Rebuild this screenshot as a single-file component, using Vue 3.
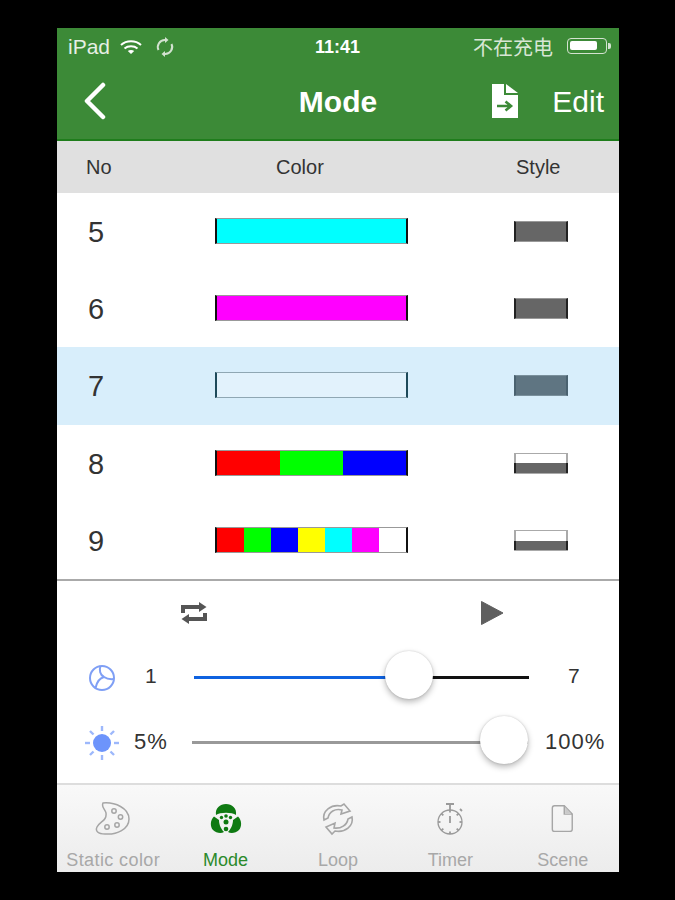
<script setup>
// Mode 页:颜色模式列表 + 速度/亮度滑块 + 底部标签栏
const rows = [
  { no: 5, colors: ['#00ffff'], style: 'solid' },
  { no: 6, colors: ['#ff00ff'], style: 'solid' },
  { no: 7, colors: ['transparent'], style: 'solid', active: true },
  { no: 8, colors: ['#ff0000', '#00ff00', '#0000ff'], style: 'half' },
  { no: 9, colors: ['#ff0000', '#00ff00', '#0000ff', '#ffff00', '#00ffff', '#ff00ff', '#ffffff'], style: 'half' },
]
const tabs = [
  { key: 'palette', label: 'Static color' },
  { key: 'mode', label: 'Mode', active: true },
  { key: 'loop', label: 'Loop' },
  { key: 'timer', label: 'Timer' },
  { key: 'scene', label: 'Scene' },
]
const rays = [0, 45, 90, 135, 180, 225, 270, 315]
const ticks = [0, 45, 90, 135, 180, 225, 270, 315]
</script>

<template>
  <div class="page">
    <div class="phone">
      <header class="top">
        <div class="status">
          <div class="status-left">
            <span>iPad</span>
            <svg class="wifi" width="24" height="16" viewBox="0 0 24 16" fill="none" stroke="#fff" stroke-width="2">
              <path d="M2 6 C7.500 1 16.500 1 22 6" />
              <path d="M5.500 9.500 C9 6.500 15 6.500 18.500 9.500" />
              <path d="M12 15 L8.800 12 C10.500 10.800 13.500 10.800 15.200 12 Z" fill="#fff" stroke="none" />
            </svg>
            <svg class="sync" width="20" height="22" viewBox="0 0 20 22" fill="none" stroke="#d3e2d0" stroke-width="2">
              <path d="M3.500 14 A7 7 0 0 1 10 4" />
              <path d="M16.500 8 A7 7 0 0 1 10 18" />
              <path d="M10 1 L13.500 4 L10 7 Z" fill="#d3e2d0" stroke="none" />
              <path d="M10 15 L6.500 18 L10 21 Z" fill="#d3e2d0" stroke="none" />
            </svg>
          </div>
          <span class="clock">11:41</span>
          <div class="status-right">
            <span class="charge">不在充电</span>
            <span class="battery"><i></i></span>
          </div>
        </div>
        <div class="nav">
          <svg class="back" width="26" height="38" viewBox="0 0 26 38" fill="none" stroke="#fff" stroke-width="4.500" stroke-linecap="round" stroke-linejoin="round">
            <path d="M21 3 L5 19 L21 35" />
          </svg>
          <span class="nav-title">Mode</span>
          <svg class="export" width="28" height="36" viewBox="0 0 28 36">
            <path d="M1 1 H13 V12 H27 V35 H1 Z" fill="#fff" />
            <path d="M15 1 L27 10 H15 Z" fill="#fff" />
            <path d="M6 23 H19 M14.500 18.500 L20 23 L14.500 27.500" fill="none" stroke="#3c8a37" stroke-width="2.600" />
          </svg>
          <span class="nav-edit">Edit</span>
        </div>
      </header>

      <div class="thead">
        <span class="col-no">No</span>
        <span class="col-color">Color</span>
        <span class="col-style">Style</span>
      </div>

      <div class="list">
        <div v-for="r in rows" :key="r.no" class="row" :class="{ active: r.active }">
          <span class="no">{{ r.no }}</span>
          <div class="bar">
            <span v-for="(c, i) in r.colors" :key="i" :style="{ background: c }"></span>
          </div>
          <div class="swatch" :class="r.style"></div>
        </div>
      </div>

      <section class="controls">
        <div class="transport">
          <svg width="28" height="24" viewBox="0 0 28 24" fill="none" stroke="#555" stroke-width="4">
            <path d="M3 12 V6 H20" />
            <path d="M25 12 V18 H8" />
            <path d="M19 1 L26.500 6 L19 11 Z" fill="#555" stroke="none" />
            <path d="M9 13 L1.500 18 L9 23 Z" fill="#555" stroke="none" />
          </svg>
          <svg width="24" height="26" viewBox="0 0 24 26">
            <path d="M1.500 1.500 L23 13 L1.500 24.500 Z" fill="#5f5f5f" stroke="#5f5f5f" stroke-linejoin="round" />
          </svg>
        </div>

        <div class="slider-row speed">
          <svg class="s-icon" width="28" height="28" viewBox="0 0 28 28" fill="none" stroke="#7f9ff5" stroke-width="2">
            <circle cx="14" cy="14" r="12" />
            <path d="M12.500 2 C11 6 12 11 16 13 C19 15 22 15.500 26 15 M16 13 C12 14 9 17 7.500 24" />
          </svg>
          <span class="val-min">1</span>
          <div class="track">
            <span class="fill" style="width: 64%"></span>
            <span class="rest"></span>
            <span class="thumb" style="left: 64.200%"></span>
          </div>
          <span class="val-max">7</span>
        </div>

        <div class="slider-row bright">
          <svg class="s-icon" width="36" height="36" viewBox="0 0 36 36">
            <circle cx="18" cy="18" r="9" fill="#6d94fb" />
            <g stroke="#9db8fb" stroke-width="2.400">
              <line v-for="a in rays" :key="a" x1="18" y1="1" x2="18" y2="6" :transform="`rotate(${a} 18 18)`" />
            </g>
          </svg>
          <span class="val-min">5%</span>
          <div class="track grey">
            <span class="thumb" style="left: 92.900%"></span>
          </div>
          <span class="val-max">100%</span>
        </div>
      </section>

      <nav class="tabs">
        <div v-for="t in tabs" :key="t.key" class="tab" :class="{ on: t.active }">
          <svg v-if="t.key === 'palette'" width="36" height="36" viewBox="0 0 36 36" fill="none" stroke="#a6a6a6" stroke-width="1.500">
            <path d="M8 2 C20 1 34 7 34 18 C34 28 22 34 10 33 C3 33 0 30 2 26 C5 20 12 20 11 12 C10 8 6 6 8 2 Z" />
            <circle cx="19" cy="10" r="2.200" /><circle cx="25.500" cy="16" r="2.200" /><circle cx="22" cy="24" r="2.200" /><circle cx="12" cy="26" r="2.200" />
          </svg>
          <svg v-else-if="t.key === 'mode'" width="32" height="32" viewBox="0 0 32 32" fill="#0f7a12">
            <path d="M6 12 C5 5 10 1 16 1 C22 1 27 5 26 12 C22 9 10 9 6 12 Z" />
            <path d="M4 13.500 C0 17 0 24 3 27 C6 30 11 31 14 29 C10 25 9 20 9 17 Z" />
            <path d="M28 13.500 C32 17 32 24 29 27 C26 30 21 31 18 29 C22 25 23 20 23 17 Z" />
            <circle cx="16" cy="13" r="1.800" />
            <circle cx="11.500" cy="14.500" r="1.700" />
            <circle cx="20.500" cy="14.500" r="1.700" />
            <circle cx="16" cy="19" r="2.500" />
            <circle cx="16" cy="26" r="2.300" />
          </svg>
          <svg v-else-if="t.key === 'loop'" width="34" height="32" viewBox="0 0 34 32" fill="none" stroke="#a6a6a6" stroke-width="1.600">
            <path d="M3 17 C1 8 10 1 20 3 L23 1 L29 8 L20 11 L21 7 C14 5 8 9 7 15 Z" />
            <path d="M31 14 C33 23 24 30 14 28 L11 31 L5 24 L14 20 L13 25 C20 26 26 22 27 16 Z" />
          </svg>
          <svg v-else-if="t.key === 'timer'" width="30" height="34" viewBox="0 0 30 34" fill="none" stroke="#9a9a9a" stroke-width="1.300">
            <circle cx="15" cy="20" r="12" />
            <path d="M11 2 H19 M15 2 V8 M25 7 L27 9" stroke-width="1.800" />
            <path d="M15 14 V21" stroke-width="1.800" />
            <line v-for="a in ticks" :key="a" x1="15" y1="8" x2="15" y2="10.500" stroke-width="1.800" :transform="`rotate(${a} 15 20)`" />
          </svg>
          <svg v-else width="23" height="29" viewBox="0 0 26 33" fill="none" stroke="#a6a6a6" stroke-width="1.600">
            <path d="M4 1.500 H15 L24 11 V28 Q24 30.500 21 30.500 H4 Q1.500 30.500 1.500 28 V4 Q1.500 1.500 4 1.500 Z" />
            <path d="M15 1.500 V11 H24" />
            <path d="M16 3 L22.500 10 H16 Z" fill="#c9c9c9" stroke="none" />
          </svg>
          <span class="tab-label">{{ t.label }}</span>
        </div>
      </nav>
    </div>
  </div>
</template>

<style scoped>
.page {
  width: 675px;
  height: 900px;
  background: #000;
  padding: 28px 56px 28px 57px;
  box-sizing: border-box;
  font-family: "Liberation Sans", "Noto Sans CJK SC", sans-serif;
}
.phone {
  height: 844px;
  display: flex;
  flex-direction: column;
  background: #fff;
  overflow: hidden;
}

.top {
  height: 113px;
  flex: none;
  background: #3c8a37;
  border-bottom: 2px solid #1f7d1c;
  box-sizing: border-box;
  color: #fff;
}
.status {
  height: 38px;
  display: flex;
  align-items: center;
  position: relative;
  padding: 0 12px 0 11px;
  font-size: 21px;
  color: #e6efe4;
}
.status-left {
  display: flex;
  align-items: center;
  gap: 9px;
}
.sync {
  margin-left: 3px;
}
.clock {
  position: absolute;
  left: 258px;
  font-size: 18px;
  font-weight: 700;
  color: #fff;
}
.status-right {
  margin-left: auto;
  display: flex;
  align-items: center;
  gap: 14px;
}
.charge {
  font-size: 20px;
  color: #d8e6d5;
  margin-top: -2px;
}
.battery {
  width: 40px;
  height: 16px;
  margin-top: -2px;
  border: 1.500px solid #d3e2d0;
  border-radius: 4px;
  box-sizing: border-box;
  padding: 2px;
  display: block;
  position: relative;
}
.battery::after {
  content: "";
  position: absolute;
  right: -4.500px;
  top: 3.500px;
  width: 2.500px;
  height: 6px;
  background: #d3e2d0;
  border-radius: 0 2px 2px 0;
}
.battery i {
  display: block;
  width: 27px;
  height: 9px;
  background: #fff;
  border-radius: 2px;
}
.nav {
  height: 73px;
  display: flex;
  align-items: center;
  position: relative;
  padding: 0 15px 0 25px;
}
.back {
  margin-top: -4px;
}
.nav-title {
  position: absolute;
  left: 0;
  right: 0;
  text-align: center;
  font-size: 30px;
  font-weight: 700;
  margin-top: -1px;
}
.export {
  margin-left: auto;
  margin-right: 33px;
  margin-top: -3px;
}
.nav-edit {
  font-size: 30px;
  margin-top: -1px;
}

.thead {
  height: 52px;
  flex: none;
  background: #e0e0e0;
  font-size: 20px;
  color: #333;
  display: grid;
  grid-template-columns: 157px 212px 1fr;
  align-items: center;
  padding-top: 1px;
  box-sizing: border-box;
}
.col-no {
  padding-left: 29px;
}
.col-color {
  padding-left: 62px;
}
.col-style {
  padding-left: 90px;
}

.row {
  height: 77.200px;
  display: grid;
  grid-template-columns: 158px 299px 1fr;
  align-items: center;
}
.row.active {
  background: #d8eefb;
}
.no {
  padding-left: 31px;
  font-size: 29px;
  color: #333;
  margin-top: 2px;
}
.bar {
  width: 193px;
  height: 26px;
  margin-top: -1px;
  display: flex;
  box-sizing: border-box;
  border: 1px solid #999;
  border-left: 2px solid #111;
  border-right: 2px solid #111;
}
.bar span {
  flex: 1;
}
.active .bar {
  border-color: #8fa7b3;
  border-left-color: #1e4a5a;
  border-right-color: #1e4a5a;
  background: #e2f2fc;
}
.swatch {
  width: 54px;
  height: 21px;
  box-sizing: border-box;
  background: #666;
  border: 1px solid #999;
  border-left: 2px solid #222;
  border-right: 2px solid #222;
}
.active .swatch {
  background: #5f7582;
  border-color: #7a909c;
  border-left-color: #4a6270;
  border-right-color: #4a6270;
}
.swatch.half {
  border-width: 1px 0;
  border-color: #aaa;
  background:
    linear-gradient(#aaa 50%, #222 50%) left / 2px 100% no-repeat,
    linear-gradient(#aaa 50%, #222 50%) right / 2px 100% no-repeat,
    linear-gradient(#fff 50%, #666 50%);
}

.controls {
  flex: 1;
  border-top: 2px solid #aaa;
  border-bottom: 2px solid #ddd;
  display: flex;
  flex-direction: column;
}
.transport {
  height: 64px;
  display: flex;
  align-items: center;
  padding-left: 123px;
  gap: 272px;
}
.slider-row {
  display: flex;
  align-items: center;
  font-size: 22px;
  color: #333;
}
.speed {
  height: 66px;
}
.bright {
  height: 64px;
}
.speed .s-icon {
  margin-left: 31px;
}
.speed .val-min {
  width: 29px;
  margin: -4px 0 0 29px;
  font-size: 21px;
}
.speed .track {
  margin-left: 20px;
  width: 335px;
}
.speed .val-max {
  margin: -4px 0 0 39px;
  font-size: 21px;
}
.bright .s-icon {
  margin-left: 27px;
}
.bright .val-min {
  width: 58px;
  margin: -2px 0 0 14px;
  letter-spacing: 1px;
}
.bright .track {
  width: 336px;
}
.bright .val-max {
  margin: -2px 0 0 17px;
  letter-spacing: 1px;
}
.track {
  position: relative;
  height: 3px;
  display: flex;
}
.track.grey {
  background: #999;
}
.fill {
  background: #0f62e0;
  height: 3px;
}
.rest {
  flex: 1;
  background: #111;
  height: 3px;
}
.thumb {
  position: absolute;
  top: -1px;
  width: 48px;
  height: 48px;
  margin: -24px 0 0 -24px;
  border-radius: 50%;
  background: #fff;
  box-shadow: 0 3px 6px rgba(0, 0, 0, 0.28), 0 0 2px rgba(0, 0, 0, 0.18);
}

.tabs {
  height: 87px;
  flex: none;
  display: grid;
  grid-template-columns: repeat(5, 1fr);
  background: linear-gradient(#f9f9f9, #ececec);
}
.tab {
  display: flex;
  flex-direction: column;
  align-items: center;
  color: #a8a8a8;
  font-size: 18px;
  white-space: nowrap;
}
.tab svg {
  height: 36px;
  margin-top: 16px;
}
.tab-label {
  margin-top: 13px;
  line-height: 20px;
}
.tab:first-child .tab-label {
  letter-spacing: 0.400px;
}
.tab.on {
  color: #2b8a2b;
}
</style>

<style>
html, body {
  margin: 0;
  background: #000;
}
</style>
